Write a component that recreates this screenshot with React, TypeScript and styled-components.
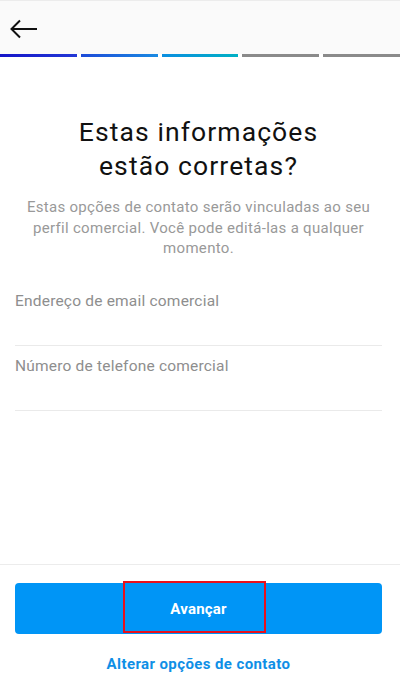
import React from "react";
import styled, { createGlobalStyle } from "styled-components";

const GlobalStyle = createGlobalStyle`
  html, body {
    margin: 0;
    padding: 0;
    background: #ffffff;
  }
  body {
    font-family: Roboto, "Liberation Sans", Arial, sans-serif;
  }
`;

const Screen = styled.div`
  width: 400px;
  height: 689px;
  display: flex;
  flex-direction: column;
  background: #ffffff;
  overflow: hidden;
`;

const Header = styled.header`
  height: 54px;
  background: #fafafa;
  border-top: 1px solid #ececec;
  box-sizing: border-box;
  display: flex;
  align-items: center;
  padding-left: 10px;
`;

const BackButton = styled.button`
  border: none;
  background: none;
  padding: 0;
  margin-top: 3px;
  width: 28px;
  height: 20px;
  display: flex;
  align-items: center;
  cursor: pointer;
`;

const Progress = styled.div`
  display: flex;
  gap: 4px;
  height: 3px;
  background: #ffffff;
`;

const Segment = styled.div<{ $from: string; $to: string }>`
  flex: 1;
  height: 3px;
  background: linear-gradient(90deg, ${(p) => p.$from}, ${(p) => p.$to});
`;

const Content = styled.main`
  flex: 1;
  display: flex;
  flex-direction: column;
  padding: 0 18px 0 15px;
`;

const Title = styled.h1`
  margin: 58px 0 0;
  text-align: center;
  font-size: 26.5px;
  letter-spacing: 1.1px;
  line-height: 34px;
  font-weight: 400;
  color: #111111;
`;

const Subtitle = styled.p`
  margin: 14px 0 0;
  text-align: center;
  font-size: 15px;
  letter-spacing: 0.3px;
  line-height: 20.5px;
  color: #999999;
`;

const Fields = styled.div`
  margin-top: 22px;
`;

const Field = styled.div`
  height: 65px;
  box-sizing: border-box;
  border-bottom: 1px solid #eaeaea;
  padding-top: 11px;
  font-size: 15.5px;
  letter-spacing: 0.2px;
  color: #8e8e8e;
`;

const Footer = styled.footer`
  border-top: 1px solid #ececec;
  padding: 18px 18px 0 15px;
  height: 125px;
  box-sizing: border-box;
  display: flex;
  flex-direction: column;
  align-items: stretch;
`;

const PrimaryButton = styled.button`
  position: relative;
  height: 51px;
  border: none;
  border-radius: 4px;
  background: #0095f6;
  color: #ffffff;
  font-family: inherit;
  font-size: 15px;
  letter-spacing: 0.2px;
  font-weight: 700;
  cursor: pointer;
`;

const Highlight = styled.span`
  position: absolute;
  left: 108px;
  top: -2px;
  width: 143px;
  height: 52px;
  box-sizing: border-box;
  border: 2px solid #e8101c;
`;

const LinkButton = styled.button`
  margin-top: 20px;
  border: none;
  background: none;
  color: #0f8fe6;
  font-family: inherit;
  font-size: 15px;
  letter-spacing: 0.4px;
  font-weight: 700;
  cursor: pointer;
`;

const segments = [
  { from: "#1515c8", to: "#2238d6" },
  { from: "#1c4ad8", to: "#1a8ae2" },
  { from: "#0a8ee0", to: "#00b0c4" },
  { from: "#8a8a8a", to: "#8a8a8a" },
  { from: "#8a8a8a", to: "#8a8a8a" },
];

export default function App() {
  return (
    <Screen>
      <GlobalStyle />
      <Header>
        <BackButton aria-label="Voltar">
          <svg width="28" height="20" viewBox="0 0 28 20" fill="none">
            <path
              d="M27 10H2M10 1.5L1.5 10 10 18.5"
              stroke="#111"
              strokeWidth="2"
              strokeLinecap="butt"
            />
          </svg>
        </BackButton>
      </Header>
      <Progress>
        {segments.map((s, i) => (
          <Segment key={i} $from={s.from} $to={s.to} />
        ))}
      </Progress>
      <Content>
        <Title>
          Estas informações
          <br />
          estão corretas?
        </Title>
        <Subtitle>
          Estas opções de contato serão vinculadas ao seu perfil comercial.
          Você pode editá-las a qualquer momento.
        </Subtitle>
        <Fields>
          <Field>Endereço de email comercial</Field>
          <Field>Número de telefone comercial</Field>
        </Fields>
      </Content>
      <Footer>
        <PrimaryButton>
          Avançar
          <Highlight />
        </PrimaryButton>
        <LinkButton>Alterar opções de contato</LinkButton>
      </Footer>
    </Screen>
  );
}
